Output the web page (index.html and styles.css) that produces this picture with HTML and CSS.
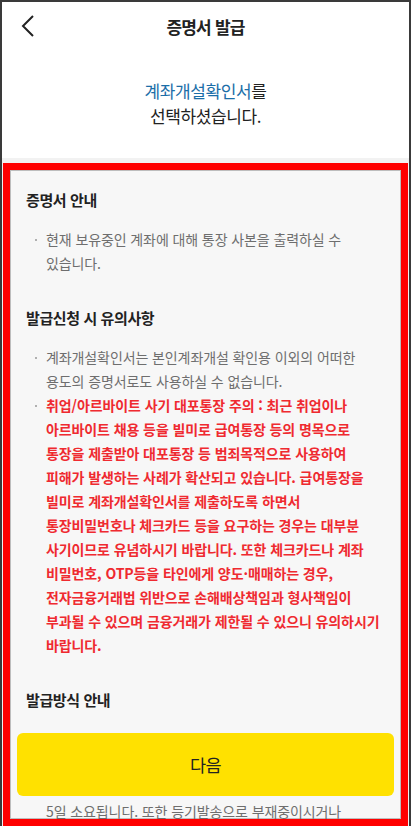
FILE: index.html
```html
<!DOCTYPE html>
<html lang="ko">
<head>
  <meta charset="UTF-8">
  <title>증명서 발급</title>
  <link rel="stylesheet" href="styles.css">
</head>
<body>
  <div class="screen">
    <header class="topbar">
      <button class="back" aria-label="뒤로">
        <svg width="14" height="22" viewBox="0 0 14 22">
          <path d="M12 1 L2 11 L12 21" fill="none" stroke="#222" stroke-width="2"/>
        </svg>
      </button>
      <h1 class="title">증명서 발급</h1>
    </header>

    <section class="intro">
      <p><span class="doc-name">계좌개설확인서</span>를<br>선택하셨습니다.</p>
    </section>

    <div class="guide-wrap">
      <div class="guide">
        <div class="guide-section">
          <h2>증명서 안내</h2>
          <ul class="bullets">
            <li>현재 보유중인 계좌에 대해 통장 사본을 출력하실 수 있습니다.</li>
          </ul>
        </div>

        <div class="guide-section">
          <h2>발급신청 시 유의사항</h2>
          <ul class="bullets">
            <li>계좌개설확인서는 본인계좌개설 확인용 이외의 어떠한 용도의 증명서로도 사용하실 수 없습니다.</li>
            <li class="warn">취업/아르바이트 사기 대포통장 주의 : 최근 취업이나 아르바이트 채용 등을 빌미로 급여통장 등의 명목으로 통장을 제출받아 대포통장 등 범죄목적으로 사용하여 피해가 발생하는 사례가 확산되고 있습니다. 급여통장을 빌미로 계좌개설확인서를 제출하도록 하면서 통장비밀번호나 체크카드 등을 요구하는 경우는 대부분 사기이므로 유념하시기 바랍니다. 또한 체크카드나 계좌 비밀번호, OTP등을 타인에게 양도·매매하는 경우, 전자금융거래법 위반으로 손해배상책임과 형사책임이 부과될 수 있으며 금융거래가 제한될 수 있으니 유의하시기 바랍니다.</li>
          </ul>
        </div>

        <div class="guide-section">
          <h2>발급방식 안내</h2>
          <ul class="bullets">
            <li>계좌개설확인서는 신청하신 주소지로 일반우편으로 발송되며, 고객님께서 받아보시기까지 영업일 기준 평균적으로 약 3~<br>5일 소요됩니다. 또한 등기발송으로 부재중이시거나 수령인이 없는 경우 반송될 수 있습니다.</li>
          </ul>
        </div>
      </div>
    </div>

    <div class="bottom-bar">
      <button class="btn-next">다음</button>
    </div>
  </div>
</body>
</html>
```

FILE: styles.css
```css
* {
  box-sizing: border-box;
}
body {
  margin: 0;
  font-family: "Noto Sans CJK KR", "Noto Sans", sans-serif;
  background: #fff;
  color: #222;
}
.screen {
  position: relative;
  width: 411px;
  height: 826px;
  border: 2px solid #3a3a3a;
  border-bottom: none;
  display: flex;
  flex-direction: column;
  overflow: hidden;
  background: #fff;
}

/* 상단 바 */
.topbar {
  height: 48px;
  display: grid;
  grid-template-columns: 56px 1fr 56px;
  align-items: center;
  flex-shrink: 0;
}
.back {
  border: none;
  background: none;
  padding: 0 0 0 19px;
  height: 48px;
  display: flex;
  align-items: center;
  cursor: pointer;
}
.title {
  margin: 0;
  text-align: center;
  font-size: 17px;
  font-weight: 600;
  letter-spacing: -0.8px;
  color: #222;
}

/* 선택 안내 */
.intro {
  padding: 28px 0 30px;
  flex-shrink: 0;
}
.intro p {
  margin: 0;
  text-align: center;
  font-size: 17px;
  line-height: 25px;
  letter-spacing: -0.4px;
  color: #222;
}
.doc-name {
  color: #1b6ea8;
}

/* 안내 문구 영역 */
.guide-wrap {
  flex: 1;
  min-height: 0;
  display: flex;
  padding: 5px 1px 0;
  background: #f2f2f2;
}
.guide {
  flex: 1;
  border: 7px solid #ff0000;
  background: #f7f7f7;
  box-shadow: inset 0 0 0 1px #bdbdbd;
  padding: 19px 18px 0 16px;
  overflow: hidden;
}
.guide-section + .guide-section {
  margin-top: 32px;
}
.guide-section h2 {
  margin: 0;
  font-size: 15px;
  line-height: 22px;
  font-weight: 700;
  letter-spacing: -0.4px;
  color: #222;
}
.bullets {
  list-style: none;
  margin: 16px 0 0;
  padding: 0;
}
.bullets li {
  position: relative;
  padding-left: 20px;
  font-size: 14px;
  line-height: 24px;
  letter-spacing: -0.1px;
  color: #6e6e6e;
  word-break: keep-all;
}
.bullets li::before {
  content: "";
  position: absolute;
  left: 9px;
  top: 12px;
  width: 2px;
  height: 2px;
  border-radius: 50%;
  background: #999;
}
.bullets li.warn {
  color: #ef2a30;
  font-weight: 700;
}

/* 하단 버튼 */
.bottom-bar {
  position: absolute;
  left: 15px;
  right: 15px;
  bottom: 30px;
}
.btn-next {
  width: 100%;
  height: 63px;
  border: none;
  border-radius: 6px;
  background: #ffe100;
  font-family: inherit;
  font-size: 17.5px;
  letter-spacing: -0.5px;
  color: #222;
  cursor: pointer;
}
```
